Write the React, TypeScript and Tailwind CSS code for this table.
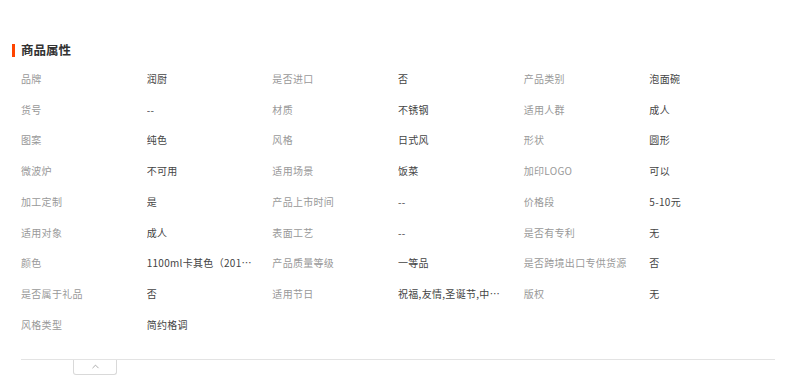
import { ChevronUp } from 'lucide-react'

const ATTRS: [string, string][] = [
  ['品牌', '润厨'],
  ['是否进口', '否'],
  ['产品类别', '泡面碗'],
  ['货号', '--'],
  ['材质', '不锈钢'],
  ['适用人群', '成人'],
  ['图案', '纯色'],
  ['风格', '日式风'],
  ['形状', '圆形'],
  ['微波炉', '不可用'],
  ['适用场景', '饭菜'],
  ['加印LOGO', '可以'],
  ['加工定制', '是'],
  ['产品上市时间', '--'],
  ['价格段', '5-10元'],
  ['适用对象', '成人'],
  ['表面工艺', '--'],
  ['是否有专利', '无'],
  ['颜色', '1100ml卡其色（2019新款）'],
  ['产品质量等级', '一等品'],
  ['是否跨境出口专供货源', '否'],
  ['是否属于礼品', '否'],
  ['适用节日', '祝福,友情,圣诞节,中秋节'],
  ['版权', '无'],
  ['风格类型', '简约格调'],
]

export default function App() {
  return (
    <div
      className="w-[800px] h-[376px] bg-white overflow-hidden"
      style={{ fontFamily: '"Noto Sans CJK SC", "Noto Sans", sans-serif' }}
    >
      {/* 标题 */}
      <div className="flex items-center gap-[6px] pl-[12px] pt-[43px] h-[57px]">
        <span className="w-[3px] h-[13px] bg-[#ff4400]" />
        <h2 className="text-[12.5px] leading-[14px] font-bold text-[#333]">商品属性</h2>
      </div>

      {/* 属性表 */}
      <div className="ml-[21px] w-[754px] mt-[6px] grid grid-cols-6 auto-rows-[30.75px]">
        {ATTRS.map(([k, v]) => (
          <div key={k} className="contents">
            <div className="flex items-center text-[10px] tracking-[0.3px] text-[#999]">{k}</div>
            <div className="flex items-center text-[10px] tracking-[0.3px] text-[#444]">
              <span className="truncate max-w-[105px]">{v}</span>
            </div>
          </div>
        ))}
      </div>

      {/* 收起 */}
      <div className="ml-[21px] w-[754px] mt-[19px] border-t border-[#e3e3e3]">
        <button className="ml-[52px] w-[44px] h-[15px] border border-t-0 border-[#d9d9d9] rounded-b-[3px] flex items-center justify-center text-[#888]">
          <ChevronUp size={11} strokeWidth={1.5} />
        </button>
      </div>
    </div>
  )
}
